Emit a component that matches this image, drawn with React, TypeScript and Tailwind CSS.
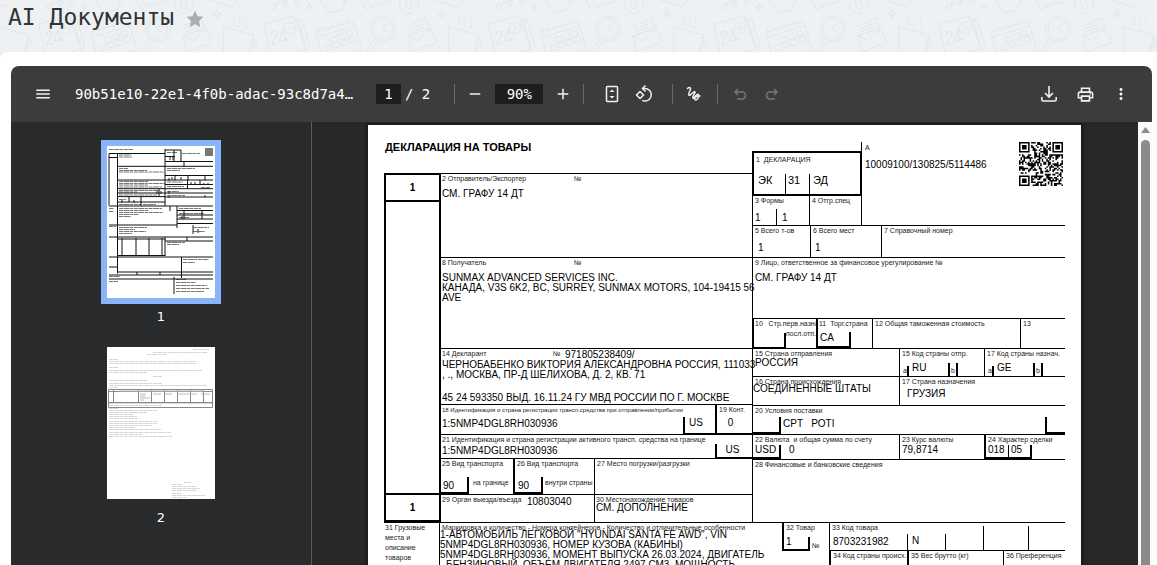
import type { ReactNode } from "react";
import { MdAdd, MdMenu, MdMoreVert, MdOutlinePrint, MdRemove } from "react-icons/md";

/* ---------- page header ---------- */

function Doodles() {
  return (
    <svg className="absolute inset-0 h-full w-full" aria-hidden="true">
      <defs>
        <pattern id="doodles" x="-20" y="0" width="225" height="110" patternUnits="userSpaceOnUse">
          <g fill="none" stroke="#e1e6e9" strokeWidth="1" strokeLinejoin="round" strokeLinecap="round">
            <path d="M0 26l7 16-7 4M225 24l-1 1" />
            <path d="M19 27l30 8-6 24H19zM47 38c9 1 4 13-3 10M48 41c4 1 2 6-3 4" />
            <path d="M28 26c4-4-3-5 2-9M34 27c4-4-3-5 2-9M40 28c4-4-3-5 2-9" />
            <path d="M12 10l1 3 3 1-3 1-1 3-1-3-3-1 3-1zM104 4l1 2 2 1-2 1-1 2-1-2-2-1 2-1z" />
            <path d="M59 24l30-8 12 33-34 10zM89 19l8 1 8 26-4 4M93 20l8 28" />
            <circle cx="85" cy="28" r="6" />
            <path d="M84 25l1 4 4-1" />
            <path d="M111 32l37-11 9 29-38 12zM113 37l36-11M112 28l2 5M117 27l2 4M122 26l2 4M127 24l2 4M132 23l2 4M137 21l2 4M142 20l2 4" />
            <path d="M125 38l5-2 2 5-5 2zM133 35l5-2 2 5-5 2zM141 32l5-2 2 5-5 2zM120 46l5-2 2 5-5 2zM128 43l5-2 2 5-5 2zM136 41l5-2 2 5-5 2zM144 38l5-2 2 5-5 2z" />
            <circle cx="178" cy="29" r="12.500" />
            <circle cx="178" cy="29" r="10" />
            <path d="M182 23l-5 6 7 4M170 39l-9 12M173 41l-8 11" />
            <path d="M203 36l19-7 10 13-25 10zM201 27l20-9 5 16M203 36l10 5 10-12M204 29l14-5M205 32l14-5M206 35l12-4" />
            <path d="M5 0l22 7 6-7M75 0l-4 4M70 5l12-4" />
            <circle cx="69" cy="7" r="2.500" />
            <circle cx="80" cy="3" r="2.500" />
            <circle cx="92" cy="2" r="2.500" />
            <path d="M115 0l9 13 13-3 3-10M138 4c6-1 3-5 3-5M156 0l5 9 25-8M163 1l3 4 9-3" />
            <circle cx="204" cy="4" r="9.500" />
            <path d="M200-1l2 9 4 2 1-5-3-8" />
            <path d="M66 35c0-4 6-5 6-1 0 3-5 6-5 11l7-2M81 41l-3-11-4 11 9-2" strokeWidth="1.300" />
          </g>
        </pattern>
      </defs>
      <rect width="100%" height="100%" fill="url(#doodles)" />
    </svg>
  );
}

/* ---------- toolbar ---------- */

function Tool({ label, children, dim = false }: { label: string; children: ReactNode; dim?: boolean }) {
  return (
    <button
      type="button"
      aria-label={label}
      disabled={dim}
      className={dim ? "flex size-8 items-center justify-center text-[#787878]" : "flex size-8 items-center justify-center text-[#f1f1f1]"}
    >
      {children}
    </button>
  );
}

function Divider() {
  return <span className="h-5 w-px shrink-0 bg-[#6b6b6b]" />;
}

function Toolbar() {
  return (
    <div className="flex h-14 shrink-0 items-center rounded-t-lg bg-[#3c3c3c] pr-[15px] pl-4 font-['DejaVu_Sans_Mono',monospace] text-sm text-white">
      <Tool label="Меню"><MdMenu size={18} /></Tool>
      <h2 className="ml-4 w-[285px] whitespace-nowrap">90b51e10-22e1-4f0b-adac-93c8d7a4…</h2>
      <input aria-label="Страница" defaultValue="1" className="ml-4 h-5 w-[25px] bg-[#1e1e1e] text-center" />
      <span className="ml-1">/ 2</span>
      <span className="ml-6 flex items-center">
        <Divider />
        <span className="ml-1 flex items-center">
          <Tool label="Уменьшить"><MdRemove size={18} /></Tool>
          <input aria-label="Масштаб" defaultValue="90%" className="mx-1 h-5 w-12 bg-[#1e1e1e] text-center" />
          <Tool label="Увеличить"><MdAdd size={18} /></Tool>
        </span>
      </span>
      <span className="ml-1 flex items-center">
        <Divider />
        <span className="ml-3 flex items-center">
          <Tool label="По размеру страницы">
            <svg width="18" height="20" viewBox="0 0 18 20" fill="none" stroke="currentColor" strokeWidth="1.500">
              <rect x="3.500" y="2.500" width="11" height="15" rx="1" />
              <path d="M6.500 8L9 5.500 11.500 8zM6.500 12L9 14.500 11.500 12z" fill="currentColor" stroke="none" />
            </svg>
          </Tool>
          <Tool label="Повернуть">
            <svg width="20" height="20" viewBox="0 0 20 20" fill="none" stroke="currentColor" strokeWidth="1.500">
              <path d="M6 7.500l3.500 3.500L6 14.500 2.500 11z" />
              <path d="M9 4.500h2a6.250 6.250 0 0 1 0 12.500c-1 0-2-.2-2.800-.6" />
              <path d="M11.500 1.500l-3 3 3 3" />
            </svg>
          </Tool>
        </span>
      </span>
      <span className="ml-3 flex items-center">
        <Divider />
        <span className="mr-2 ml-1 flex items-center">
          <Tool label="Рисовать">
            <svg width="18" height="18" viewBox="0 0 18 18" fill="none" stroke="currentColor" strokeWidth="1.500" strokeLinecap="round">
              <path d="M3.500 3.500C4.800 2.300 6.500 2 6.500 3.700c0 2-2.700 4.800-1.600 6.300 1.300 1.500 3.300-3 5.600-3.300 2.200 0-2.500 4.300-1.500 6.300 1.200 1.800 2.700-4.300 5-3.800 1.600.6.500 4.800-1.500 5.600-2 .5-2.500-1.700-1-2.700 1.300-.9 2.700-1 4.500-1" />
            </svg>
          </Tool>
        </span>
        <Divider />
        <span className="ml-1.5 flex items-center">
          <Tool label="Отменить" dim>
            <svg width="16" height="16" viewBox="0 0 16 16" fill="none" stroke="currentColor" strokeWidth="1.500">
              <path d="M6 3L3 6l3 3M3 6h7a3.500 3.500 0 0 1 0 7H5" />
            </svg>
          </Tool>
          <Tool label="Повторить" dim>
            <svg width="16" height="16" viewBox="0 0 16 16" fill="none" stroke="currentColor" strokeWidth="1.500">
              <path d="M10 3l3 3-3 3M13 6H6a3.500 3.500 0 0 0 0 7h5" />
            </svg>
          </Tool>
        </span>
      </span>
      <span className="ml-auto flex items-center gap-1">
        <Tool label="Скачать">
          <svg width="20" height="20" viewBox="0 0 20 20" fill="none" stroke="currentColor" strokeWidth="1.600">
            <path d="M10 2v10.500M6 9l4 4 4-4M2.800 13v2.500a1.500 1.500 0 0 0 1.500 1.500h11.400a1.500 1.500 0 0 0 1.500-1.500V13" />
          </svg>
        </Tool>
        <Tool label="Печать"><MdOutlinePrint size={19} /></Tool>
        <Tool label="Ещё"><MdMoreVert size={18} /></Tool>
      </span>
    </div>
  );
}

/* ---------- thumbnails ---------- */

const t1Lines =
  "M2 7.500h56M2 7.500v52M10.500 7.500v120M2 11.500h8M58 3v57M58 4h16v12M58 10.500h10M67 4v11M58 15.500h48M77 15.500v5M10.500 20.300h95.500M58 29.500h48M68 29.500v5M81 29.500v5M98 29.500v5M10.500 34h95.500M80.500 34v9M93 34v5M58 38.500h48M10.500 42.700h95.500M10.500 47h95.500M52 43v8M58 51h48M10.500 50.600h48M22 51v5M34 51v9M10.500 56h48M2 60h104M63 60v5M70 60v22M70 64.500h36M77 65v8M95 65v8M70 69h36M70 73h36M70 77.500h36M2 79h68M2 91h104M10.500 93h48M15 92v18M29 92v18M42 92v18M55 92v18M58 91v19M80 91v4M58 95h48M10.500 109.500h48M2 111h104M74.500 111v21M2 121h8M10 126h96M2 129h104M2 133h104M30 126v3M53 126v3M67 131v17";
const t1Text = [
  [2, 3, 24], [60, 6, 10], [75, 7, 18], [12, 8.500, 12], [12, 10.500, 13], [12, 22, 9], [12, 24, 28], [12, 25.500, 45], [60, 22, 28], [60, 24, 13],
  [12, 35, 30], [12, 37, 46], [12, 38.500, 29], [12, 40.500, 43], [12, 44, 40], [12, 45.500, 18], [12, 48.500, 38], [60, 35.500, 16], [60, 40, 17],
  [94, 41, 9], [60, 45, 12], [60, 49, 18], [12, 53, 7], [12, 58, 22], [36, 58, 13], [2, 62, 5], [2, 65, 5], [12, 62, 43], [12, 64, 30], [12, 66, 44],
  [12, 68, 20], [12, 70, 12], [72, 62, 22], [72, 67, 25], [72, 71, 10], [2, 80, 7], [12, 81, 28], [12, 83, 16], [12, 85, 27], [12, 87, 13], [86, 81, 16],
  [86, 85, 12], [60, 96, 18], [60, 98, 12], [76, 113, 26], [76, 116, 12], [2, 130, 11], [2, 135, 9], [69, 133, 10], [69, 136, 20], [69, 139, 31], [69, 142, 33], [69, 145, 28],
];
const t2Text = [
  [86, 2, 16], [46, 5, 54], [40, 7, 20], [2, 12, 9], [2, 14, 87], [2, 16, 87], [2, 20, 9], [2, 23, 93], [2, 25, 38], [46, 29, 9], [2, 33, 38], [2, 36, 53],
  [2, 38, 98], [2, 40, 9], [2, 56, 104], [2, 58, 53], [2, 61, 9], [2, 63, 48], [2, 65, 38], [2, 67, 24], [2, 69, 28], [2, 71, 30], [2, 74, 48], [2, 76, 48],
  [2, 78, 43], [2, 80, 26], [2, 82, 52], [2, 85, 62], [2, 87, 33], [2, 89, 63], [77, 135, 7], [65, 137, 10], [65, 139, 24], [65, 141, 28], [65, 143, 25],
  [65, 146, 10], [65, 148, 33], [65, 150, 15],
];

function TextStrokes({ rows, color }: { rows: number[][]; color: string }) {
  return <path d={rows.map(([x, y, w]) => `M${x} ${y + 0.5}h${w}`).join("")} stroke={color} strokeWidth="1" strokeDasharray="4 .6 6 .5 3 .7" />;
}

function Thumbnails() {
  return (
    <nav className="flex w-[301px] shrink-0 flex-col items-center border-r border-[#5b5b5b] bg-[#292a2c] pt-[18px] font-['DejaVu_Sans',sans-serif] text-[13px] leading-4 text-white">
      <button type="button" className="flex flex-col items-center">
        <span className="border-[6px] border-[#8ab4f8] bg-white">
          <svg width="108" height="152" viewBox="0 0 108 152" fill="none">
            <TextStrokes rows={t1Text} color="#777" />
            <path d={t1Lines} stroke="#111" strokeWidth="1" />
            <path d="M98 2h8v8h-8z" fill="#777" />
            <path d="M63 11v3M66 11v3M62 32v3M65 31v3M74 31v3M84 36v3M88 36v3M97 37v2M101 37v2M50 45v3M54 45v3M62 45v3M62 50v2M98 49v2M15 54v3M27 54v3M75 70v3M86 79v9M91 83v4" stroke="#222" />
          </svg>
        </span>
        <span className="mt-[5px]">1</span>
      </button>
      <button type="button" className="mt-[22px] flex flex-col items-center">
        <svg className="bg-white" width="108" height="152" viewBox="0 0 108 152" fill="none">
          <TextStrokes rows={t2Text} color="#d6d6d6" />
          <path d="M1.500 42.500h104v18h-104zM1.500 44.500h104M1.500 55.500h104M6.500 43v12M31.500 43v12M44.500 43v12M57.500 43v12M70.500 43v12M83.500 43v12M96.500 43v12" stroke="#888" />
          <path d="M12 44h85M33 47h6M33 49h5M33 51h10M33 53h4M46 47h8M58 47h7M70 47h20M94 47h9" stroke="#bbb" />
        </svg>
        <span className="mt-[11px]">2</span>
      </button>
    </nav>
  );
}

/* ---------- customs form ---------- */

function qrPath() {
  const n = 29;
  let seed = 20250813;
  let d = "";
  const inFinder = (x: number, y: number) => (x < 8 && y < 8) || (x > 20 && y < 8) || (x < 8 && y > 20);
  for (let y = 0; y < n; y++) {
    for (let x = 0; x < n; x++) {
      seed = (seed * 1103515245 + 12345) % 2147483648;
      if (!inFinder(x, y) && seed / 2147483648 > 0.48) d += `M${x} ${y}h1v1h-1z`;
    }
  }
  return d;
}

function Qr() {
  return (
    <svg width="44" height="44" viewBox="0 0 29 29" role="img" aria-label="QR">
      <path d={qrPath()} />
      <path fillRule="evenodd" d="M0 0h7v7H0zM1 1v5h5V1zM22 0h7v7h-7zM23 1v5h5V1zM0 22h7v7H0zM1 23v5h5v-5z" />
      <path d="M2 2h3v3H2zM24 2h3v3h-3zM2 24h3v3H2z" />
    </svg>
  );
}

function Label({ children, className = "", size = "text-[7px]" }: { children: ReactNode; className?: string; size?: string }) {
  return <span className={`block whitespace-pre leading-[10px] text-[#222] ${size} ${className}`}>{children}</span>;
}

function Cell({ label, className = "", children }: { label?: ReactNode; className?: string; children?: ReactNode }) {
  return (
    <div className={`flex flex-col border-black whitespace-pre ${className}`}>
      {label && <Label className="pl-[2px]">{label}</Label>}
      {children}
    </div>
  );
}

function LeftColumn() {
  return (
    <div className="w-[55px] border-2 border-r-0 border-black text-center text-[10px] font-bold">
      <div className="flex h-[27px] items-center justify-center border-b-2 border-black">1</div>
      <div className="h-[293px] border-b-2 border-black" />
      <div className="flex h-[25px] items-center justify-center">1</div>
    </div>
  );
}

function MiddleColumn() {
  return (
    <div className="w-[313px] border-t border-l-2 border-black">
      <Cell className="h-[84px] border-b">
        <div className="flex pl-px"><Label className="w-[132px]">2 Отправитель/Экспортер</Label><Label>№</Label></div>
        <span className="pt-[5px] pl-px">СМ. ГРАФУ 14 ДТ</span>
      </Cell>
      <Cell className="h-[91px] border-b">
        <div className="flex pl-px"><Label className="w-[132px]">8 Получатель</Label><Label>№</Label></div>
        <span className="pt-[5px] pl-px">{"SUNMAX ADVANCED SERVICES INC.\nКАНАДА, V3S 6K2, BC, SURREY, SUNMAX MOTORS, 104-19415 56\nAVE"}</span>
      </Cell>
      <Cell className="h-[56px] border-b">
        <div className="flex pl-px">
          <Label className="w-[111px]">14 Декларант</Label><Label className="w-3">№</Label><span className="pt-px">971805238409/</span>
        </div>
        <span className="pl-px">{"ЧЕРНОБАБЕНКО ВИКТОРИЯ АЛЕКСАНДРОВНА РОССИЯ, 111033\n, ., МОСКВА, ПР-Д ШЕЛИХОВА, Д. 2, КВ. 71"}</span>
        <span className="mt-auto pb-px pl-px">45 24 593350 ВЫД. 16.11.24 ГУ МВД РОССИИ ПО Г. МОСКВЕ</span>
      </Cell>
      <div className="flex h-[30px]">
        <Cell className="min-w-0 flex-1 border-b">
          <Label size="text-[6px]" className="h-[8px] pl-px leading-[8px]">18 Идентификация и страна регистрации трансп.средства при отправлении/прибытии</Label>
          <div className="flex flex-1 items-end">
            <span className="flex-1 self-center pl-px">1:5NMP4DGL8RH030936</span>
            <span className="-mb-px h-[18px] w-8 border-b-2 border-l-2 border-black pt-px pl-1">US</span>
          </div>
        </Cell>
        <Cell className="w-[37px] border-b-2 border-l-2">
          <Label className="h-[8px] pl-[2px] leading-[8px]">19 Конт.</Label>
          <span className="pt-[5px] pr-2 text-center">0</span>
        </Cell>
      </div>
      <Cell className="h-[24px] border-b">
        <Label className="h-[8px] pl-px leading-[8px]">21 Идентификация и страна регистрации активного трансп. средства на границе</Label>
        <div className="flex flex-1 items-end">
          <span className="flex-1 self-center pl-px">1:5NMP4DGL8RH030936</span>
          <span className="-mb-px h-[15px] w-[37px] border-b-2 border-l-2 border-black pt-px pr-1 text-center">US</span>
        </div>
      </Cell>
      <div className="flex h-[36px] border-b border-black">
        <Cell className="w-[72px]">
          <Label className="pl-px">25 Вид транспорта</Label>
          <div className="mt-auto flex items-end">
            <span className="h-[17px] w-[28px] border-r-2 border-b-2 border-black pt-1 pl-[2px]">90</span>
            <Label className="h-[16px] pl-1">на границе</Label>
          </div>
        </Cell>
        <Cell className="w-[81px] border-l-2" label="26 Вид транспорта">
          <div className="mt-auto flex items-end">
            <span className="h-[17px] w-[28px] border-r-2 border-b-2 border-black pt-1 pl-[3px]">90</span>
            <Label className="h-[16px] pl-[2px]">внутри страны</Label>
          </div>
        </Cell>
        <Cell className="flex-1 border-l" label="27 Место погрузки/разгрузки" />
      </div>
      <div className="flex h-[27px]">
        <Cell className="w-[153px]">
          <div className="flex"><Label className="w-[86px] pl-px">29 Орган выезда/въезда</Label><span className="pt-[2px]">10803040</span></div>
        </Cell>
        <Cell className="flex-1 border-l"><Label className="h-[8px] pl-px leading-[8px]">30 Местонахождение товаров</Label><span className="pl-px">СМ. ДОПОЛНЕНИЕ</span></Cell>
      </div>
    </div>
  );
}

function CountryCode({ label, code, className }: { label: string; code: string; className: string }) {
  return (
    <Cell className={className} label={label}>
      <div className="mt-auto flex items-end">
        <Label className="h-[10px] w-[9px] border-r-2 border-black pl-[3px]">a</Label>
        <span className="w-[39px] self-start pl-[3px]">{code}</span>
        <Label className="h-[13px] w-[10px] border-x-2 border-black pt-[3px] pl-px">b</Label>
      </div>
    </Cell>
  );
}

function RightColumn() {
  return (
    <div className="flex-1 pt-[17px]">
      <div className="flex h-[84px] border-b border-black">
        <div className="flex w-[110px] flex-col border-r border-black pt-[9px]">
          <div className="-mr-px flex h-[45px] flex-col border-2 border-black">
            <Label className="pt-[2px] pl-[2px]">1  ДЕКЛАРАЦИЯ</Label>
            <div className="mt-auto flex h-[20px] text-[11px] leading-[12px]">
              <span className="w-8 border-r border-black pl-1">ЭК</span>
              <span className="w-6 border-r border-black pl-[2px]">31</span>
              <span className="pl-[3px]">ЭД</span>
            </div>
          </div>
          <div className="flex flex-1">
            <Cell className="w-[58px] border-x" label="3 Формы">
              <div className="mt-auto flex h-4"><span className="w-6 border-r border-black pt-[4px] pl-[2px]">1</span><span className="pt-[4px] pl-[5px]">1</span></div>
            </Cell>
            <Cell label="4 Отгр.спец" />
          </div>
        </div>
        <div className="flex-1 pt-px"><Label className="pl-[3px]">A</Label><span className="block pt-[7px] pl-[3px]">10009100/130825/5114486</span></div>
        <div className="mr-[2px]"><Qr /></div>
      </div>
      <div className="flex h-[32px] border-b border-l border-black">
        <Cell className="w-[57px]" label="5 Всего т-ов"><span className="pt-[7px] pl-[5px]">1</span></Cell>
        <Cell className="w-[71px] border-l" label="6 Всего мест"><span className="pt-[7px] pl-1">1</span></Cell>
        <Cell className="flex-1 border-l" label="7 Справочный номер" />
      </div>
      <Cell className="h-[61px] border-b border-l" label="9 Лицо, ответственное за финансовое урегулирование №"><span className="pt-[5px] pl-[2px]">СМ. ГРАФУ 14 ДТ</span></Cell>
      <div className="flex h-[30px] border-b border-black">
        <Cell className="w-[64px] border-l-2">
          <Label className="pl-px">10   Стр.перв.назн/</Label>
          <div className="flex flex-1 items-end"><span className="h-[16px] w-8 border-r-2 border-b-2 border-black" /><Label className="h-[20px]">посл.отп.</Label></div>
        </Cell>
        <Cell className="w-[56px] border-l-2">
          <Label className="pl-px">11  Торг.страна</Label>
          <span className="mt-auto h-[16px] w-[33px] border-r-2 border-b-2 border-black pt-px pl-[2px]">CA</span>
        </Cell>
        <Cell className="w-[148px] border-l" label="12 Общая таможенная стоимость" />
        <Cell className="border-l" label="13" />
      </div>
      <div className="flex h-[28px] border-b border-l border-black">
        <Cell className="w-[146px]"><Label className="h-[9px] pl-[2px]">15 Страна отправления</Label><span className="pl-[2px]">РОССИЯ</span></Cell>
        <CountryCode className="w-[85px] border-l" label="15 Код страны отпр." code="RU" />
        <CountryCode className="flex-1 border-l" label="17 Код страны назнач." code="GE" />
      </div>
      <div className="flex h-[29px] border-b border-l border-black">
        <Cell className="w-[146px]"><Label className="h-[7px] pl-[2px]">16 Страна происхождения</Label><span>СОЕДИНЕННЫЕ ШТАТЫ</span></Cell>
        <Cell className="flex-1 border-l" label="17 Страна назначения"><span className="pt-[2px] pl-[7px]">ГРУЗИЯ</span></Cell>
      </div>
      <Cell className="h-[29px] border-b border-l">
        <Label className="h-2 pl-[2px] leading-2">20 Условия поставки</Label>
        <div className="flex flex-1 items-end">
          <span className="h-[17px] w-7 border-r-2 border-b-2 border-black" />
          <span className="flex-1 self-center pl-[2px]">CPT   POTI</span>
          <span className="h-[17px] w-5 border-b-2 border-l-2 border-black" />
        </div>
      </Cell>
      <div className="flex h-[25px] border-b border-l border-black">
        <Cell className="w-[146px]" label="22 Валюта  и общая сумма по счету">
          <div className="flex flex-1"><span className="w-7 border-r-2 border-b-2 border-black pl-[2px]">USD</span><span className="pl-2">0</span></div>
        </Cell>
        <Cell className="w-[85px] border-l" label="23 Курс валюты"><span className="pl-[2px]">79,8714</span></Cell>
        <Cell className="flex-1 border-l-2" label="24 Характер сделки">
          <div className="flex w-[46px] flex-1 border-r-2 border-b-2 border-black"><span className="w-[23px] border-r border-black pl-[2px]">018</span><span className="pl-[2px]">05</span></div>
        </Cell>
      </div>
      <Cell className="h-[62px] border-l" label="28 Финансовые и банковские сведения" />
    </div>
  );
}

function GoodsSection() {
  return (
    <div className="flex border-t border-black">
      <Cell className="w-[55px]"><Label className="pl-px">{"31 Грузовые\nместа и\nописание\nтоваров"}</Label></Cell>
      <Cell className="w-[343px] border-l">
        <Label className="h-[7px] pl-[2px]">Маркировка и количество - Номера контейнеров - Количество и отличительные особенности</Label>
        <span>{"1-АВТОМОБИЛЬ ЛЕГКОВОЙ \"HYUNDAI SANTA FE AWD\", VIN\n5NMP4DGL8RH030936, НОМЕР КУЗОВА (КАБИНЫ)\n5NMP4DGL8RH030936, МОМЕНТ ВЫПУСКА 26.03.2024, ДВИГАТЕЛЬ\n- БЕНЗИНОВЫЙ, ОБЪЕМ ДВИГАТЕЛЯ 2497 СМ3, МОЩНОСТЬ"}</span>
      </Cell>
      <Cell className="w-[47px]">
        <div className="flex h-[28px] items-end">
          <div className="h-full w-7 border-b-2 border-l-2 border-black">
            <Label className="h-[14px] pl-[2px]">32 Товар</Label>
            <span className="block h-3 border-r-2 border-black pl-[2px]">1</span>
          </div>
          <Label className="pl-[2px]">№</Label>
        </div>
      </Cell>
      <div className="flex flex-1 flex-col">
        <div className="flex h-[28px] items-end border-b border-l border-black">
          <Cell className="h-full w-[77px]" label="33 Код товара"><span className="pt-1 pl-[3px]">8703231982</span></Cell>
          <span className="h-4 w-[39px] border-x border-black pt-[2px] pl-1">N</span>
          <span className="h-6 w-[38px] border-r border-black" />
          <span className="h-6 w-[45px] border-r border-black" />
        </div>
        <div className="flex h-[28px] border-l-2 border-black">
          <Cell className="w-[76px]" label="34 Код страны происх." />
          <Cell className="w-[96px] border-l-2" label="35 Вес брутто (кг)" />
          <Cell className="flex-1 border-l" label="36 Преференция" />
        </div>
      </div>
    </div>
  );
}

function Declaration() {
  return (
    <article className="mx-auto w-[713px] bg-white px-4 pb-10 font-['Liberation_Sans',Arial,sans-serif] text-[10px] leading-[10px] text-black shadow-[0_0_4px_2px_#1a1a1a]">
      <div className="flex">
        <div className="w-[368px]">
          <h3 className="flex h-12 items-center pb-1 pl-px text-[11px] font-bold">ДЕКЛАРАЦИЯ НА ТОВАРЫ</h3>
          <div className="flex"><LeftColumn /><MiddleColumn /></div>
        </div>
        <RightColumn />
      </div>
      <GoodsSection />
    </article>
  );
}

export default function App() {
  return (
    <div className="flex h-screen flex-col overflow-hidden bg-white">
      <header className="relative h-[60px] shrink-0 bg-[#edf1f4]">
        <Doodles />
        <div className="relative flex items-center gap-3 pt-px pl-2">
          <h1 className="font-['DejaVu_Sans_Mono',monospace] text-[23px] leading-8 text-[#333]">AI Документы</h1>
          <button type="button" aria-label="В избранное" className="pt-1 text-[#a9adb2]">
            <svg width="18" height="18" viewBox="0 0 18 18" fill="currentColor">
              <path d="M9 .5l2.500 5.700 6 .6-4.500 4.200 1.300 6L9 13.900 3.700 17 5 11 .5 6.800l6-.6z" />
            </svg>
          </button>
        </div>
      </header>
      <main className="relative -mt-2 flex min-h-0 flex-1 flex-col rounded-tl-lg bg-white pt-[14px] pr-[5px] pl-[11px]">
        <Toolbar />
        <div className="flex min-h-0 flex-1 bg-[#282828]">
          <Thumbnails />
          <section className="min-w-0 flex-1 overflow-hidden pt-[3px] pr-px"><Declaration /></section>
          <div className="flex w-[14px] shrink-0 flex-col items-center bg-[#fafafa] pt-[5px]" aria-hidden="true">
            <svg width="9" height="6" viewBox="0 0 9 6"><path d="M4.500 0L9 6H0z" fill="#8b8b8b" /></svg>
            <span className="mt-[7px] w-[9px] flex-1 rounded-t-full bg-[#8b8b8b]" />
          </div>
        </div>
      </main>
    </div>
  );
}
